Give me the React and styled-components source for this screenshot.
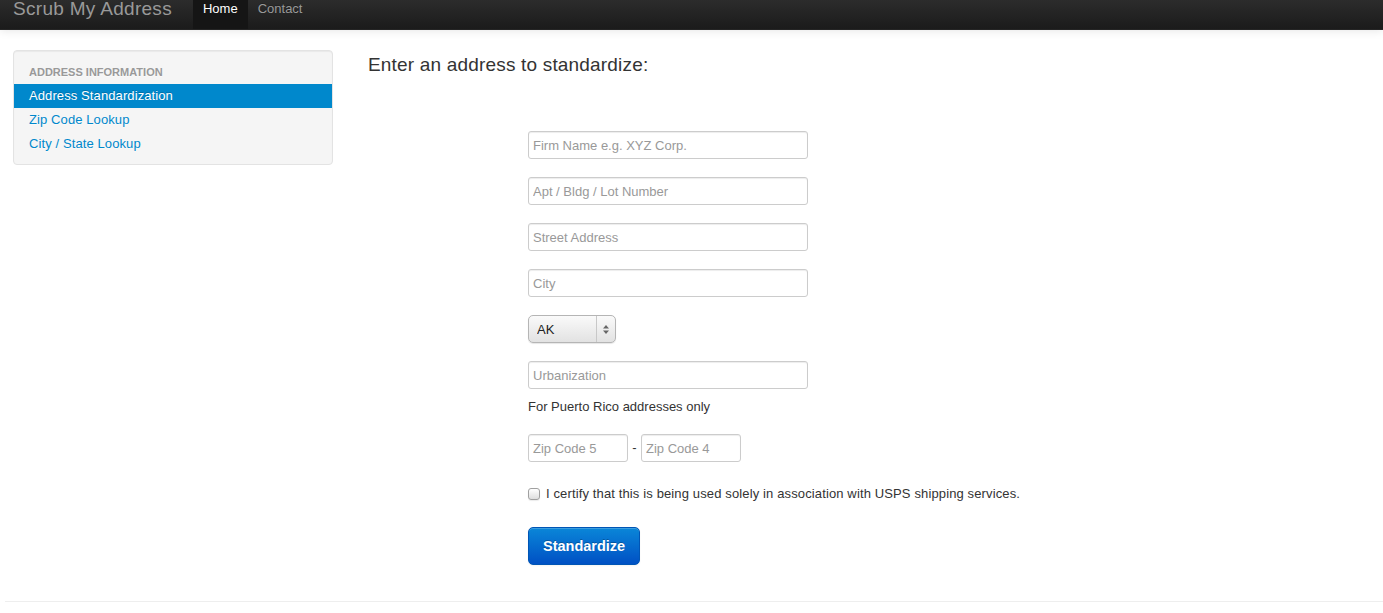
import React from "react";
import styled, { createGlobalStyle } from "styled-components";

const GlobalStyle = createGlobalStyle`
  html, body {
    margin: 0;
    padding: 0;
    background: #ffffff;
    font-family: "Liberation Sans", Arial, sans-serif;
    font-size: 13px;
    line-height: 20px;
    color: #333333;
  }
`;

const Navbar = styled.div`
  height: 29px;
  display: flex;
  align-items: flex-start;
  padding-left: 13px;
  background: linear-gradient(#2c2c2c, #1b1b1b);
  border-bottom: 1px solid #252525;
  box-shadow: 0 1px 10px rgba(0, 0, 0, 0.1);
`;

const Brand = styled.a`
  font-size: 19px;
  letter-spacing: 0.3px;
  line-height: 18px;
  color: #999999;
  text-decoration: none;
  margin-right: 21px;
`;

const NavLink = styled.a`
  display: block;
  height: 29px;
  padding: 0 10px;
  line-height: 18px;
  font-size: 13px;
  text-decoration: none;
  color: ${({ active }) => (active ? "#ffffff" : "#999999")};
  background: ${({ active }) => (active ? "#151515" : "transparent")};
  text-shadow: 0 -1px 0 rgba(0, 0, 0, 0.25);
`;

const Container = styled.div`
  display: flex;
  align-items: flex-start;
  padding: 20px 13px 0 13px;
  gap: 35px;
`;

const Well = styled.div`
  width: 318px;
  flex: none;
  background: #f5f5f5;
  border: 1px solid #e3e3e3;
  border-radius: 4px;
  box-shadow: inset 0 1px 1px rgba(0, 0, 0, 0.05);
  padding: 11px 0 8px;
`;

const NavHeader = styled.div`
  padding: 0 15px;
  font-size: 11px;
  font-weight: bold;
  line-height: 20px;
  color: #999999;
  text-transform: uppercase;
  text-shadow: 0 1px 0 rgba(255, 255, 255, 0.5);
  margin-bottom: 2px;
`;

const SideItem = styled.a`
  display: block;
  height: 24px;
  line-height: 24px;
  padding: 0 15px;
  font-size: 13px;
  letter-spacing: 0.1px;
  text-decoration: none;
  color: ${({ active }) => (active ? "#ffffff" : "#0088cc")};
  background: ${({ active }) => (active ? "#0088cc" : "transparent")};
  text-shadow: ${({ active }) =>
    active ? "0 -1px 0 rgba(0,0,0,0.2)" : "0 1px 0 rgba(255,255,255,0.5)"};
`;

const Main = styled.div`
  flex: 1;
`;

const Heading = styled.h3`
  margin: 0;
  font-size: 19px;
  letter-spacing: 0.18px;
  font-weight: normal;
  line-height: 24px;
  color: #333333;
  padding-top: 3px;
`;

const Form = styled.form`
  display: flex;
  flex-direction: column;
  align-items: flex-start;
  padding-left: 160px;
  padding-top: 54px;
`;

const Field = styled.div`
  margin-bottom: ${({ mb }) => mb ?? 18}px;
`;

const Input = styled.input`
  box-sizing: border-box;
  width: ${({ w }) => w || 280}px;
  height: 28px;
  padding: 4px 4px;
  font-family: "Liberation Sans", Arial, sans-serif;
  font-size: 13px;
  color: #555555;
  border: 1px solid #cccccc;
  border-radius: 3px;
  background: #ffffff;
  box-shadow: inset 0 1px 1px rgba(0, 0, 0, 0.075);
  outline: none;
  &::placeholder {
    color: #999999;
  }
`;

const SelectWrap = styled.div`
  position: relative;
  width: 88px;
  height: 28px;
`;

const Select = styled.select`
  appearance: none;
  box-sizing: border-box;
  width: 88px;
  height: 28px;
  padding: 0 0 0 8px;
  font-family: "Liberation Sans", Arial, sans-serif;
  font-size: 13px;
  color: #222222;
  border: 1px solid #b5b5b5;
  border-radius: 5px;
  background: linear-gradient(#fafafa, #e2e2e2);
  box-shadow: 0 1px 1px rgba(0, 0, 0, 0.1);
  outline: none;
`;

const SelectArrows = styled.div`
  position: absolute;
  top: 1px;
  right: 1px;
  bottom: 1px;
  width: 18px;
  border-left: 1px solid #c8c8c8;
  display: flex;
  align-items: center;
  justify-content: center;
  pointer-events: none;
`;

const HelpText = styled.div`
  margin-top: 8px;
  margin-bottom: 17px;
  font-size: 13px;
  line-height: 20px;
  color: #333333;
`;

const ZipRow = styled.div`
  display: flex;
  align-items: center;
  margin-bottom: 22px;
`;

const Dash = styled.span`
  width: 13px;
  text-align: center;
  font-size: 13px;
  color: #333333;
`;

const CheckLabel = styled.label`
  display: flex;
  align-items: center;
  gap: 6px;
  height: 20px;
  font-size: 13px;
  letter-spacing: 0.13px;
  color: #333333;
  margin-bottom: 23px;
`;

const Checkbox = styled.input`
  appearance: none;
  margin: 0;
  width: 12px;
  height: 12px;
  border: 1px solid #a0a0a0;
  border-radius: 3px;
  background: linear-gradient(#ffffff, #dedede);
  box-shadow: 0 1px 1px rgba(0, 0, 0, 0.08);
`;

const Button = styled.button`
  height: 38px;
  padding: 0 14px;
  font-family: "Liberation Sans", Arial, sans-serif;
  font-size: 14.5px;
  font-weight: bold;
  color: #ffffff;
  text-shadow: 0 -1px 0 rgba(0, 0, 0, 0.25);
  border: 1px solid #0055b5;
  border-radius: 5px;
  background: linear-gradient(#0a86d8, #0050c4);
  box-shadow: inset 0 1px 0 rgba(255, 255, 255, 0.2), 0 1px 2px rgba(0, 0, 0, 0.05);
`;

const Footer = styled.hr`
  margin: 36px 0 0 5px;
  border: 0;
  border-top: 1px solid #eeeeee;
  border-bottom: 1px solid #ffffff;
`;

const App = () => {
  return (
    <>
      <GlobalStyle />
      <Navbar>
        <Brand href="#">Scrub My Address</Brand>
        <NavLink href="#" active>
          Home
        </NavLink>
        <NavLink href="#">Contact</NavLink>
      </Navbar>
      <Container>
        <Well>
          <NavHeader>Address Information</NavHeader>
          <SideItem href="#" active>
            Address Standardization
          </SideItem>
          <SideItem href="#">Zip Code Lookup</SideItem>
          <SideItem href="#">City / State Lookup</SideItem>
        </Well>
        <Main>
          <Heading>Enter an address to standardize:</Heading>
          <Form onSubmit={(e) => e.preventDefault()}>
            <Field>
              <Input placeholder="Firm Name e.g. XYZ Corp." />
            </Field>
            <Field>
              <Input placeholder="Apt / Bldg / Lot Number" />
            </Field>
            <Field>
              <Input placeholder="Street Address" />
            </Field>
            <Field>
              <Input placeholder="City" />
            </Field>
            <Field>
              <SelectWrap>
                <Select defaultValue="AK">
                  <option>AK</option>
                  <option>AL</option>
                  <option>AZ</option>
                </Select>
                <SelectArrows>
                  <svg width="6" height="9" viewBox="0 0 6 9">
                    <path d="M0 3.5 L3 0 L6 3.5 Z" fill="#666" />
                    <path d="M0 5.5 L3 9 L6 5.5 Z" fill="#666" />
                  </svg>
                </SelectArrows>
              </SelectWrap>
            </Field>
            <Field mb={0}>
              <Input placeholder="Urbanization" />
            </Field>
            <HelpText>For Puerto Rico addresses only</HelpText>
            <ZipRow>
              <Input w={100} placeholder="Zip Code 5" />
              <Dash>-</Dash>
              <Input w={100} placeholder="Zip Code 4" />
            </ZipRow>
            <CheckLabel>
              <Checkbox type="checkbox" />I certify that this is being used solely in
              association with USPS shipping services.
            </CheckLabel>
            <Button type="submit">Standardize</Button>
          </Form>
        </Main>
      </Container>
      <Footer />
    </>
  );
};

export default App;
